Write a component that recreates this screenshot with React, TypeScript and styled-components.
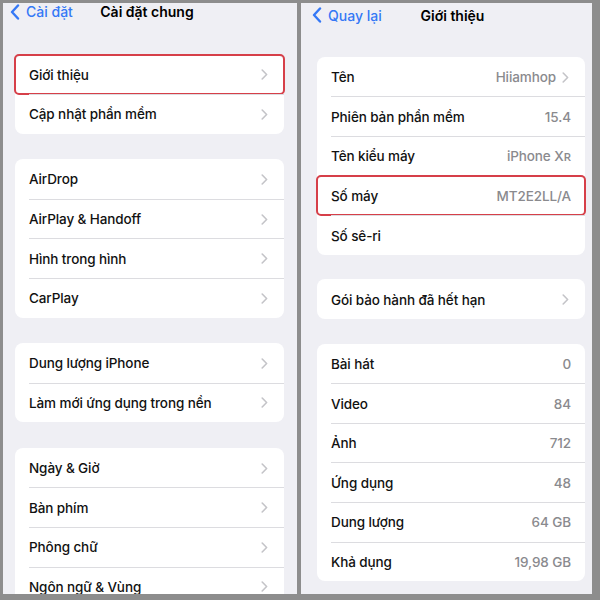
import styled, { createGlobalStyle } from "styled-components";

const GlobalStyle = createGlobalStyle`
  html, body {
    margin: 0;
    padding: 0;
    background: #8d8d8d;
  }
  body {
    font-family: Inter, "Noto Sans", Arial, sans-serif;
    -webkit-font-smoothing: antialiased;
  }
`;

const Frame = styled.div`
  width: 600px;
  height: 600px;
  box-sizing: border-box;
  padding: 3px 8px 6px 3px;
  background: #8d8d8d;
  display: grid;
  grid-template-columns: 294px 291px;
  column-gap: 4px;
`;

const Screen = styled.div<{ $left: number; $right: number; $top: number; $gap: number }>`
  background: #efeff4;
  overflow: hidden;
  display: flex;
  flex-direction: column;
  gap: ${(p) => p.$gap}px;
  padding: ${(p) => `${p.$top}px ${p.$right}px 0 ${p.$left}px`};
`;

const Nav = styled.div<{ $back: number; $space: number }>`
  height: 20px;
  margin: 0 0 ${(p) => p.$space}px ${(p) => p.$back}px;
  display: grid;
  grid-template-columns: 1fr auto 1fr;
  align-items: center;
`;

const Back = styled.div`
  display: flex;
  align-items: center;
  gap: 6px;
  color: #3478f6;
  font-size: 14px;
  font-weight: 500;
`;

const Title = styled.div<{ $shift: number }>`
  font-size: 14px;
  font-weight: 600;
  color: #000;
  transform: translateX(${(p) => p.$shift}px);
`;

const Card = styled.div`
  background: #fff;
  border-radius: 8px;
  flex-shrink: 0;
`;

const Row = styled.div`
  position: relative;
  height: 39.6px;
  box-sizing: border-box;
  display: flex;
  align-items: center;
  padding: 1px 14px 0 14px;
  & + &::before {
    content: "";
    position: absolute;
    top: 0;
    left: 14px;
    right: 0;
    height: 1px;
    background: #dcdce0;
  }
`;

const Label = styled.span`
  flex: 1;
  font-size: 13.5px;
  letter-spacing: -0.1px;
  font-weight: 500;
  color: #111;
  white-space: nowrap;
`;

const Value = styled.span`
  font-size: 13.5px;
  letter-spacing: -0.1px;
  font-weight: 500;
  color: #8a8a8e;
  white-space: nowrap;
`;

const Highlight = styled.div`
  position: absolute;
  inset: -1px -1px -1px -1px;
  border: 2px solid #d63f49;
  border-radius: 5px;
  pointer-events: none;
`;

const ChevronWrap = styled.span`
  display: flex;
  margin-left: 6px;
  margin-right: 2px;
`;

const Chevron = () => (
  <ChevronWrap>
    <svg width="7" height="11" viewBox="0 0 7 11">
      <polyline points="1.2,1 5.6,5.5 1.2,10" fill="none" stroke="#c4c4c8" strokeWidth="1.6" strokeLinecap="round" strokeLinejoin="round" />
    </svg>
  </ChevronWrap>
);

const BackChevron = () => (
  <svg width="10" height="16" viewBox="0 0 10 16">
    <polyline points="8,1.5 2,8 8,14.5" fill="none" stroke="#3478f6" strokeWidth="2.4" strokeLinecap="round" strokeLinejoin="round" />
  </svg>
);

type Item = { label: string; value?: string; chevron?: boolean; marked?: boolean };

const leftGroups: Item[][] = [
  [
    { label: "Giới thiệu", chevron: true, marked: true },
    { label: "Cập nhật phần mềm", chevron: true },
  ],
  [
    { label: "AirDrop", chevron: true },
    { label: "AirPlay & Handoff", chevron: true },
    { label: "Hình trong hình", chevron: true },
    { label: "CarPlay", chevron: true },
  ],
  [
    { label: "Dung lượng iPhone", chevron: true },
    { label: "Làm mới ứng dụng trong nền", chevron: true },
  ],
  [
    { label: "Ngày & Giờ", chevron: true },
    { label: "Bàn phím", chevron: true },
    { label: "Phông chữ", chevron: true },
    { label: "Ngôn ngữ & Vùng", chevron: true },
  ],
];

const rightGroups: Item[][] = [
  [
    { label: "Tên", value: "Hiiamhop", chevron: true },
    { label: "Phiên bản phần mềm", value: "15.4" },
    { label: "Tên kiểu máy", value: "iPhone Xʀ" },
    { label: "Số máy", value: "MT2E2LL/A", marked: true },
    { label: "Số sê-ri" },
  ],
  [{ label: "Gói bảo hành đã hết hạn", chevron: true }],
  [
    { label: "Bài hát", value: "0" },
    { label: "Video", value: "84" },
    { label: "Ảnh", value: "712" },
    { label: "Ứng dụng", value: "48" },
    { label: "Dung lượng", value: "64 GB" },
    { label: "Khả dụng", value: "19,98 GB" },
  ],
];

const Groups = ({ groups }: { groups: Item[][] }) => (
  <>
    {groups.map((g, i) => (
      <Card key={i}>
        {g.map((it) => (
          <Row key={it.label}>
            <Label>{it.label}</Label>
            {it.value && <Value>{it.value}</Value>}
            {it.chevron && <Chevron />}
            {it.marked && <Highlight />}
          </Row>
        ))}
      </Card>
    ))}
  </>
);

export default function App() {
  return (
    <>
      <GlobalStyle />
      <Frame>
        <Screen $left={12} $right={13} $top={0} $gap={25.5}>
          <Nav $back={-5} $space={9}>
            <Back>
              <BackChevron />
              Cài đặt
            </Back>
            <Title $shift={0}>Cài đặt chung</Title>
            <span />
          </Nav>
          <Groups groups={leftGroups} />
        </Screen>
        <Screen $left={16} $right={7} $top={2} $gap={24.6}>
          <Nav $back={-5} $space={7.3}>
            <Back>
              <BackChevron />
              Quay lại
            </Back>
            <Title $shift={4}>Giới thiệu</Title>
            <span />
          </Nav>
          <Groups groups={rightGroups} />
        </Screen>
      </Frame>
    </>
  );
}
